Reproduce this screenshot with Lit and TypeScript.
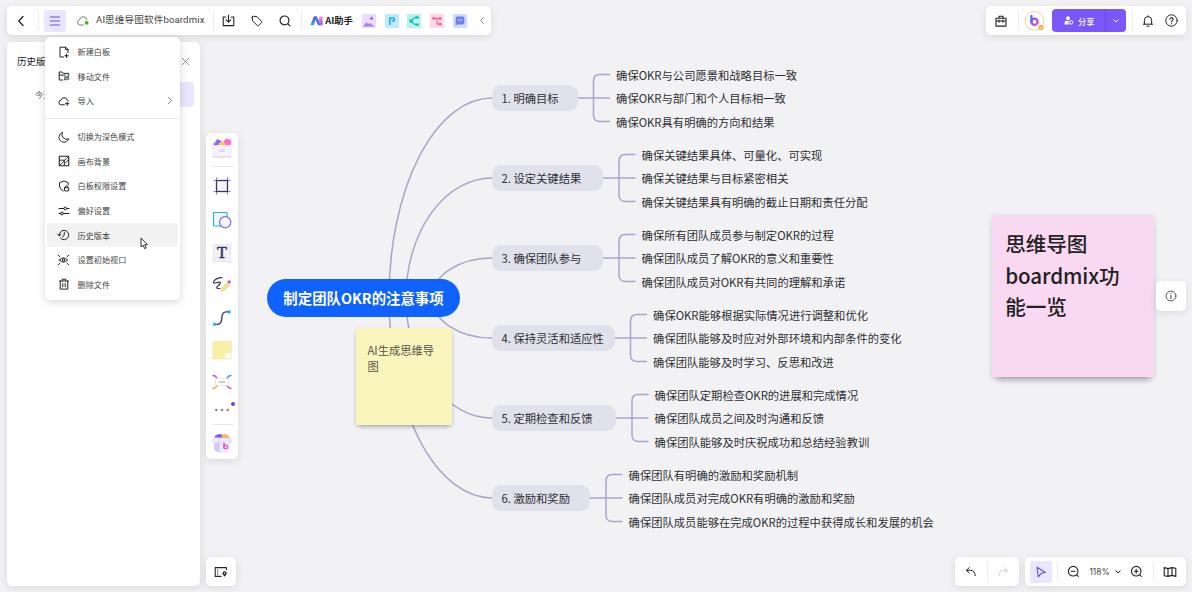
import { LitElement, html, svg, css } from "lit";
import { customElement, property } from "lit/decorators.js";
import { classMap } from "lit/directives/class-map.js";

const box = (w: number, h: number, body: unknown) =>
  html`<svg width=${w} height=${h} viewBox="0 0 ${w} ${h}" fill="none" stroke="currentColor" stroke-width="1" stroke-linecap="round" stroke-linejoin="round">${body}</svg>`;

const icons: Record<string, () => unknown> = {
  back: () => box(8, 12, svg`<path d="M6 1.5L1.8 6 6 10.5" stroke-width="1.3"/>`),
  burger: () => box(12, 12, svg`<path d="M1.3 2h9.4M1.3 6h9.4M1.3 10h9.4" stroke-width="1.1"/>`),
  cloud: () => box(14, 12, svg`<path d="M7.5 10H4a2.7 2.7 0 0 1-.4-5.3A3.8 3.8 0 0 1 11 4.6" stroke="#777"/><circle cx="10.7" cy="7.8" r="1.9" fill="#3fb50a" stroke="none"/>`),
  download: () => box(13, 13, svg`<path d="M3.8 3H1.2v8.6h10.6V3H9.2M6.5 1v7M4.2 5.8l2.3 2.3 2.3-2.3" stroke-width="1.1"/>`),
  tag: () => box(12, 12, svg`<path d="M1.2 2.2L1.6 6l4.8 4.6q.6.5 1.2 0l3-3q.5-.6 0-1.2L6 1.7 2.2 1.2q-1 0-1 1z"/>`),
  search: () => box(12, 12, svg`<circle cx="5.5" cy="5.4" r="4.4" stroke-width="1.2"/><path d="M8.9 8.8l2 2.1" stroke-width="1.2"/>`),
  left: () => box(6, 9, svg`<path d="M4.4 1.5L1.5 4.5l2.9 3" stroke="#888"/>`),
  ai: () => html`<svg width="13" height="10" viewBox="0 0 13 10"><defs><linearGradient id="a" x1="0" y1="1" x2="1" y2="0"><stop offset="0" stop-color="#20c8f0"/><stop offset=".6" stop-color="#4a6bf5"/><stop offset="1" stop-color="#5a43e0"/></linearGradient><linearGradient id="b" x1="0" y1="0" x2="0" y2="1"><stop offset="0" stop-color="#ff8dbb"/><stop offset="1" stop-color="#a24df5"/></linearGradient></defs><path d="M.3 9.2L3.6 1q.3-.5.9-.5h2L3.7 9.2z" fill="url(#a)"/><path d="M4.2.5h2.6l4 8.700H8z" fill="#3f6ef2"/><path d="M9.6.6h2.500q.5 0 .5.6v8h-1.800L8.800 4.600z" fill="url(#b)"/></svg>`,
  image: () => html`<svg width="14" height="14" viewBox="0 0 14 14"><rect width="14" height="14" rx="1" fill="#eadcfd"/><path d="M1 12.6l3-3.7q.6-.6 1.2 0l1.2 1.3.8-.8q.7-.6 1.3 0l4 3.2z" fill="#a97cf2"/><path d="M9.6 2.6v3.600M7.800 4.400h3.600" stroke="#9350e8" stroke-width="1"/></svg>`,
  ppt: () => html`<svg width="14" height="14" viewBox="0 0 14 14"><rect width="14" height="14" rx="1" fill="#bfeafd"/><path d="M4.900 11V4h3.300q1.400 0 1.400 1.500t-1.400 1.500H6.800" fill="none" stroke="#1ba4f3" stroke-width="1.500"/></svg>`,
  mind: () => html`<svg width="14" height="14" viewBox="0 0 14 14"><rect width="14" height="14" rx="1" fill="#b9f2ec"/><path d="M9.500 3.400Q5.500 3.600 5.200 7q.3 3.400 4.300 3.600" fill="none" stroke="#10c4b8" stroke-width="1.200"/><circle cx="4.200" cy="7" r="2.100" fill="#10c4b8"/><rect x="8.200" y="2.300" width="3.800" height="2.400" rx="1" fill="#10c4b8"/><rect x="8.200" y="9.400" width="3.800" height="2.400" rx="1" fill="#10c4b8"/></svg>`,
  flow: () => html`<svg width="14" height="14" viewBox="0 0 14 14"><rect width="14" height="14" rx="1" fill="#ffd7e5"/><path d="M3 4.400h7M7 4.400v5.700h3" fill="none" stroke="#ef5a8d" stroke-width="1"/><rect x="2.300" y="3.200" width="2.800" height="2.400" rx=".6" fill="#ef5a8d"/><rect x="8.800" y="3.200" width="2.800" height="2.400" rx=".6" fill="#ef5a8d"/><rect x="8.800" y="8.900" width="2.800" height="2.400" rx=".6" fill="#ef5a8d"/></svg>`,
  chat: () => html`<svg width="14" height="14" viewBox="0 0 14 14"><rect width="14" height="14" rx="1" fill="#cfdcfd"/><path d="M4.300 2.600h5.400q1.700 0 1.700 1.700v4.400q0 1.700-1.700 1.700H4.600l-2 1.200V4.300q0-1.700 1.700-1.700z" fill="#6f7ff4"/><path d="M5.800 5.300v1.600M8.200 5.300v1.600" stroke="#fff" stroke-width=".9"/></svg>`,
  close: () => box(9, 9, svg`<path d="M1.2 1.2l6.600 6.600M7.800 1.2L1.2 7.800" stroke="#777" stroke-width=".8"/>`),
  newBoard: () => box(12, 12, svg`<path d="M5.600 11H2V1.200h5.800L10 3.400v3.200M8.500 8v3.600M6.700 9.800h3.600M7.600 1.300v2.300H10"/>`),
  moveFile: () => box(12, 12, svg`<path d="M4.800 10H1.200V2h3l1.200 1.400h5.300v1.800M1.200 5.100h6M6.300 7.100h4.600L9.800 6.200M10.900 9H6.300l1.100.9"/>`),
  importFile: () => box(12, 12, svg`<path d="M6.300 9.800H3.400a2.300 2.300 0 0 1-.3-4.600 3.200 3.200 0 0 1 6.200-.2q1 .3 1.400 1M9.200 7v3.400M7.500 8.700h3.400"/>`),
  moon: () => box(12, 12, svg`<path d="M4.200 1.500A5 5 0 1 0 10.700 7.800 4.900 4.900 0 0 1 4.200 1.500z"/>`),
  background: () => box(12, 12, svg`<rect x="1.300" y="1.300" width="9.400" height="9.400" rx=".5" stroke-width="1.100"/><path d="M1.500 10.500l9-9M1.500 5.200h5.200M6.300 6v4.500M6.500 8.800l4-4" stroke-width=".9"/>`),
  shield: () => box(12, 12, svg`<path d="M5.300 11Q1.500 9.400 1.500 6V2.600L5.900 1l4.300 1.600v2.200"/><rect x="6.500" y="7.700" width="4.200" height="3.200" rx=".4"/><path d="M7.400 7.600v-.8q0-1.100 1.200-1.100t1.200 1.100v.8"/>`),
  sliders: () => box(12, 12, svg`<path d="M1 3.500h4.800M8.600 3.500H11M1 8.500h1.600M5.400 8.500H11"/><circle cx="7.200" cy="3.500" r="1.400"/><circle cx="4" cy="8.500" r="1.400"/>`),
  history: () => box(13, 12, svg`<path d="M2.300 6.300A4.700 4.700 0 1 1 3.600 9.300M.6 5.200l1.700 1.700L4 5.300M7.400 3.600L7 6.600 5.400 8"/>`),
  viewport: () => box(13, 12, svg`<path d="M2.400 6q4-4.400 8.200 0-4.200 4.400-8.200 0zM1.200 1.200l1.700 1.500M11.800 1.200l-1.700 1.500M1.200 10.800l1.700-1.500M11.800 10.800l-1.700-1.500"/><circle cx="6.500" cy="6" r="1.200"/>`),
  trash: () => box(12, 12, svg`<path d="M1.400 3h9.200M4.200 2.800V1.200h3.600v1.600M2.200 3.200v7.900h7.600V3.200M4.800 5.500v3.300M7.200 5.500v3.300"/>`),
  right: () => box(6, 9, svg`<path d="M1.500 1.500l3 3-3 3" stroke="#777"/>`),
  down: () => box(8, 6, svg`<path d="M1.800 1.800L4 4l2.200-2.200"/>`),
  toolbox: () => box(12, 12, svg`<path d="M1 3.300h10v7.800H1zM4 3V1.200h4V3M1.200 6h9.600M4 5v2.200M8 5v2.200" stroke-width="1.100"/>`),
  bell: () => box(12, 12, svg`<path d="M1.400 9.200h9.200M2.400 9V5.200a3.600 3.600 0 0 1 7.200 0V9M5 11.200h2M6 .8v.6"/>`),
  help: () => box(13, 13, svg`<circle cx="6.500" cy="6.500" r="5.700"/><path d="M4.900 5.300a1.600 1.600 0 1 1 2.300 1.400q-.7.4-.7 1.100M6.500 9.500v.2" stroke-width="1.100"/>`),
  share: () => html`<svg width="10" height="9" viewBox="0 0 10 9"><circle cx="4" cy="2.200" r="1.900" fill="#fff"/><path d="M.5 8.600V7q0-2.300 2.400-2.300h1.800Q4 7 5.200 8.600z" fill="#fff"/><circle cx="7.200" cy="6.400" r="1.700" fill="none" stroke="#fff" stroke-width="1"/></svg>`,
  info: () => box(12, 12, svg`<circle cx="6" cy="6" r="4.900" stroke-width=".9"/><path d="M6 5.500v3M6 3.500v.2" stroke-width="1.100"/>`),
  undo: () => box(12, 12, svg`<path d="M4.300 1.600L1.400 4.300l2.900 2.700M1.600 4.300h4.200Q10 4.500 10.200 9.700"/>`),
  redo: () => box(12, 12, svg`<path d="M7.700 1.600l2.900 2.700-2.900 2.700M10.400 4.300H6.200Q2 4.500 1.800 9.700"/>`),
  pointer: () => box(12, 12, svg`<path d="M2 1.200l8.400 5.300-4.300.8L3.300 10.900z" stroke-width="1.100"/>`),
  minus: () => box(13, 13, svg`<circle cx="6.200" cy="6.200" r="4.800" stroke-width="1.100"/><path d="M4.200 6.200h4M9.800 9.800l1.500 1.500" stroke-width="1.100"/>`),
  plus: () => box(13, 13, svg`<circle cx="6.200" cy="6.200" r="4.800" stroke-width="1.100"/><path d="M4.200 6.200h4M6.200 4.200v4M9.800 9.800l1.500 1.500" stroke-width="1.100"/>`),
  map: () => box(14, 12, svg`<path d="M1.200 1.600L5 2.600l4-1 3.800.6v8.200L9 9.400l-4 1-3.800-.6zM5 2.600v7.600M9 1.800v7.600" stroke-width="1.100"/>`),
  minimap: () => box(14, 12, svg`<path d="M7 10.400H1.200V1.600h11.200v2.200M3.700 4v.2M3.700 6v.2M3.700 8v.2" stroke-width="1.100"/><path d="M10.600 10.800Q8.600 8.700 8.600 7.300a2 2 0 0 1 4 0q0 1.400-2 3.500z" fill="currentColor" stroke="none"/><circle cx="10.600" cy="7.200" r=".7" fill="#fff" stroke="none"/>`),
  gift: () => html`<svg width="20" height="20" viewBox="0 0 20 20"><rect x=".7" y="4" width="18.600" height="15.600" rx="1.600" fill="#d3cfdf"/><path d="M1.600 7.500L5 .9 9.600 3 8 8z" fill="#8a68f4"/><path d="M11.600 3.200L14.200.4l4.600 1.400.2 4.400L17 8h-5z" fill="#ff6ad5"/><path d="M6 8q.6-4 4-4.200 3.600.2 4 4.200z" fill="#ffc45c"/><path d="M1 7.200h18v9.800q0 1.500-1.600 1.500H2.600Q1 18.500 1 17z" fill="#f5f2fe"/><rect x="7.400" y="11.500" width="5.200" height="2.600" rx=".8" fill="#dcd3fa"/></svg>`,
  frame: () => html`<svg width="18" height="18" viewBox="0 0 18 18" fill="none"><rect x="3.500" y="3.500" width="11" height="11" fill="#f3f2f8" stroke="#3b3560" stroke-width="1.300"/><path d="M3.500 2.800V.6M14.500 2.800V.6M3.500 15.200v2.200M14.500 15.200v2.200M2.800 3.500H.6M2.800 14.500H.6M15.200 3.500h2.200M15.200 14.500h2.200" stroke="#7b76b5" stroke-width="1.200"/></svg>`,
  shapes: () => html`<svg width="20" height="18" viewBox="0 0 20 18"><rect x="1.500" y="1.500" width="13.500" height="13.500" rx=".8" fill="#ebfafd" stroke="#35aecb" stroke-width="1.200"/><circle cx="13.200" cy="11.200" r="5.600" fill="#f4f3ff" stroke="#746fe0" stroke-width="1.200"/></svg>`,
  text: () => html`<svg width="20" height="20" viewBox="0 0 20 20"><rect x="1.700" y="1.700" width="16.600" height="16.600" fill="#eff0f8" stroke="#dddde6" stroke-width=".7"/><g fill="#fff" stroke="#d9d9e2" stroke-width=".6"><circle cx="1.900" cy="1.900" r="1.500"/><circle cx="18.100" cy="1.900" r="1.500"/><circle cx="1.900" cy="18.100" r="1.500"/><circle cx="18.100" cy="18.100" r="1.500"/></g><text x="10" y="15" text-anchor="middle" font-family="Liberation Serif, serif" font-size="16" fill="#35315a" stroke="#35315a" stroke-width=".5">T</text></svg>`,
  pen: () => html`<svg width="20" height="18" viewBox="0 0 20 18" fill="none"><path d="M9.800 1.600Q4.500 1.500 1.700 5.500q-.9 1.900 1.600 1.500l4-.9q1.800.2.6 1.900l-3 3q-.8 1.300 1 1.500h2" stroke="#35315a" stroke-width="1.200" stroke-linecap="round"/><path d="M8.600 15.600l.6-3.200 7-7 2.600 2.600-7 7z" fill="#f7e078" stroke="#ddd6ee" stroke-width=".7"/><circle cx="17.200" cy="5.700" r="1.500" fill="#b347e0"/></svg>`,
  connector: () => html`<svg width="20" height="18" viewBox="0 0 20 18" fill="none"><path d="M3 15.300h2.500Q9.600 15.300 9.800 9T14.500 2.900H17" stroke="#35315a" stroke-width="1.300"/><circle cx="2.600" cy="15.300" r="1.800" fill="#33b1e8"/><circle cx="17" cy="2.900" r="1.800" fill="#33b1e8"/></svg>`,
  sticky: () => html`<svg width="20" height="20" viewBox="0 0 20 20"><path d="M.8 1.200h18.400V19H.8z" fill="#fdfdfb" stroke="#e3e1d6" stroke-width=".7"/><path d="M.8 1.200h18.400V13l-6 6H.8z" fill="#f8efa4"/><path d="M13.200 19v-5.200q0-.8.8-.8h5.200z" fill="#fff"/></svg>`,
  mindmap: () => html`<svg width="20" height="16" viewBox="0 0 20 16" fill="none" stroke-width="1.300" stroke-linecap="round"><path d="M1 1.500q3 .2 4.200 3.500" stroke="#b25ad8"/><path d="M19 1.500q-3 .2-4.200 3.500" stroke="#4a9be0"/><path d="M1 14.500q3-.2 4.200-3.500" stroke="#f0a52e"/><path d="M19 14.500q-3-.2-4.200-3.500" stroke="#e25585"/><rect x="3.500" y="4.800" width="13" height="6.500" rx="1" fill="#fff" stroke="#dcdce4" stroke-width=".8"/><path d="M7.400 8h5.200" stroke="#bbb" stroke-width="1.700"/></svg>`,
  more: () => html`<svg width="16" height="6" viewBox="0 0 16 6" fill="#888"><circle cx="2.300" cy="3" r="1.300"/><circle cx="8" cy="3" r="1.300"/><circle cx="13.700" cy="3" r="1.300"/></svg>`,
  kit: () => html`<svg width="22" height="20" viewBox="0 0 22 20"><path d="M3.800 3q3.500-2.600 7.200-1.600V5H3.500z" fill="#7a5fe6"/><path d="M11 1.400q4.600-1 7.400 1.800L18 5.600h-7.600z" fill="#f6b655"/><path d="M3.300 5h5.400v14.400L4.400 18q-1.100-.4-1.100-1.400z" fill="#d2c6fb"/><path d="M8.700 5h10v11.800q0 1.100-1.100 1.300l-8.900 1.300z" fill="#efe9ff" stroke="#d9d0f2" stroke-width=".4"/><path d="M3.300 4.800L.8 8.900l6 1.300 2-5.400zM18.700 4.800l2.600 4-2.600.7z" fill="#f1ecff" stroke="#d5ccef" stroke-width=".5"/><path d="M13 10.200v5" stroke="#9b4af0" stroke-width="1.300" stroke-linecap="round"/><circle cx="14.800" cy="14" r="1.800" fill="none" stroke="#f0509c" stroke-width="1.300"/></svg>`,
  logo: () => html`<svg width="22" height="22" viewBox="0 0 22 22" fill="none"><defs><linearGradient id="c" x1="0" y1="0" x2="1" y2="1"><stop offset="0" stop-color="#5b6df8"/><stop offset=".5" stop-color="#b04bea"/><stop offset="1" stop-color="#fa4f88"/></linearGradient></defs><circle cx="10.500" cy="10.800" r="9.300" fill="#fff" stroke="#f4cf94" stroke-width="1"/><path d="M7.400 5.800v6.200" stroke="#3f74f4" stroke-width="2.200" stroke-linecap="round"/><circle cx="10.500" cy="11.800" r="3.100" stroke="url(#c)" stroke-width="2.300"/><circle cx="17" cy="17.500" r="2.600" fill="#f3a84c"/><path d="M15.700 17.300l1.300 1.200 1.300-1.200" stroke="#fff" stroke-width=".8"/></svg>`,
};

@customElement("ui-icon")
class UiIcon extends LitElement {
  @property() name = "";
  static styles = css`
    :host { display: inline-flex; flex: none; }
    svg { display: block; overflow: visible; }
  `;
  render() {
    return icons[this.name]?.();
  }
}

const topics = [
  { label: "1. 明确目标", y: 98, w: 85.5, leaves: ["确保OKR与公司愿景和战略目标一致", "确保OKR与部门和个人目标相一致", "确保OKR具有明确的方向和结果"] },
  { label: "2. 设定关键结果", y: 178, w: 111, leaves: ["确保关键结果具体、可量化、可实现", "确保关键结果与目标紧密相关", "确保关键结果具有明确的截止日期和责任分配"] },
  { label: "3. 确保团队参与", y: 258, w: 111, leaves: ["确保所有团队成员参与制定OKR的过程", "确保团队成员了解OKR的意义和重要性", "确保团队成员对OKR有共同的理解和承诺"] },
  { label: "4. 保持灵活和适应性", y: 338, w: 122.5, leaves: ["确保OKR能够根据实际情况进行调整和优化", "确保团队能够及时应对外部环境和内部条件的变化", "确保团队能够及时学习、反思和改进"] },
  { label: "5. 定期检查和反馈", y: 418, w: 124, leaves: ["确保团队定期检查OKR的进展和完成情况", "确保团队成员之间及时沟通和反馈", "确保团队能够及时庆祝成功和总结经验教训"] },
  { label: "6. 激励和奖励", y: 498, w: 98, leaves: ["确保团队有明确的激励和奖励机制", "确保团队成员对完成OKR有明确的激励和奖励", "确保团队成员能够在完成OKR的过程中获得成长和发展的机会"] },
];
const rootY = 298;
const reach: Record<number, number> = { 200: 103, 120: 86, 40: 60 };

@customElement("mind-map")
class MindMap extends LitElement {
  static styles = css`
    :host { display: block; position: absolute; inset: 0; color: #2e2e33; font-size: 11.3px; }
    svg { position: absolute; inset: 0; }
    .topic { position: absolute; left: 492px; height: 26px; display: flex; align-items: center; transform: translateY(-50%); white-space: nowrap; }
    .pill { box-sizing: border-box; height: 26px; line-height: 26px; padding-left: 9.500px; border-radius: 9px; background: #e1e1eb; }
    .leaves { margin-left: 38.600px; display: flex; flex-direction: column; }
    .leaf { height: 23.500px; line-height: 24px; }
    .root { position: absolute; left: 267px; top: 279px; width: 193px; height: 38px; line-height: 37px; border-radius: 19px; background: #0f62fe; color: #fff; font-size: 14.400px; font-weight: 700; text-align: center; white-space: nowrap; }
    .note { position: absolute; box-sizing: border-box; }
    .yellow { left: 355.500px; top: 328px; width: 96.500px; height: 97px; padding: 13.500px 12px; background: #faf5bd; color: #55544a; font-size: 11.300px; line-height: 16.700px; box-shadow: 0 3px 5px -2px rgba(0,0,0,.35), 0 1px 4px rgba(0,0,0,.08); }
    .pink { left: 992px; top: 215px; width: 162px; height: 162px; padding: 13px 20px 13px 13.200px; background: #f9d8f1; color: #222; font-size: 20.600px; letter-spacing: -.1px; font-weight: 500; line-height: 31.600px; box-shadow: 0 6px 7px -4px rgba(0,0,0,.35), 0 1px 6px rgba(0,0,0,.1); }
  `;
  render() {
    return html`
      <svg width="1192" height="592" fill="none" stroke="#a9a5c9" stroke-width="1.5">
        ${topics.map((t) => {
          const dy = Math.abs(t.y - rootY);
          const rx = reach[dy];
          const r = 492 + t.w;
          const top = t.y - 23.5;
          const bottom = t.y + 23.5;
          return svg`<path d="M${492 - rx} ${rootY}A${rx} ${dy} 0 0 ${t.y < rootY ? 1 : 0} 492 ${t.y}"/>
            <path d="M${r} ${t.y}h32.500M${r + 32.5} ${top}h-10q-6.500 0-6.500 6.500V${bottom - 6.5}q0 6.500 6.500 6.500h10"/>`;
        })}
      </svg>
      ${topics.map(
        (t) => html`<div class="topic" style="top:${t.y}px">
          <div class="pill" style="width:${t.w}px">${t.label}</div>
          <div class="leaves">${t.leaves.map((l) => html`<div class="leaf">${l}</div>`)}</div>
        </div>`
      )}
      <div class="root">制定团队OKR的注意事项</div>
      <div class="note yellow">AI生成思维导图</div>
      <div class="note pink">思维导图boardmix功能一览</div>
    `;
  }
}

const menu: [string, string, string?][] = [
  ["newBoard", "新建白板"],
  ["moveFile", "移动文件"],
  ["importFile", "导入", "more"],
  ["", ""],
  ["moon", "切换为深色模式"],
  ["background", "画布背景"],
  ["shield", "白板权限设置"],
  ["sliders", "偏好设置"],
  ["history", "历史版本", "hover"],
  ["viewport", "设置初始视口"],
  ["trash", "删除文件"],
];

@customElement("main-menu")
class MainMenu extends LitElement {
  static styles = css`
    :host { display: block; box-sizing: border-box; width: 135.500px; padding: 2.300px 2.500px 3px; background: #fff; border-radius: 5px; box-shadow: 0 2px 8px rgba(0,0,0,.16); font-size: 8.150px; color: #444; }
    .item { display: flex; align-items: center; height: 24.600px; padding: 0 5px 0 10px; border-radius: 4px; }
    .glyph { display: flex; justify-content: center; width: 13px; margin-right: 7.500px; color: #222; }
    .label { flex: 1; }
    .hover { background: #f2f2f2; }
    .rule { height: 1px; margin: 5.200px -2.500px; background: #e6e6e8; }
  `;
  render() {
    return menu.map(([icon, label, kind]) =>
      icon
        ? html`<div class=${classMap({ item: true, hover: kind === "hover" })}>
            <span class="glyph"><ui-icon name=${icon}></ui-icon></span><span class="label">${label}</span>
            ${kind === "more" ? html`<ui-icon name="right"></ui-icon>` : ""}
          </div>`
        : html`<div class="rule"></div>`
    );
  }
}

const tools: [string, number][] = [
  ["gift", 31], ["", 6], ["frame", 33.5], ["shapes", 33.3], ["text", 33.2], ["pen", 32], ["connector", 32.5],
  ["sticky", 32.5], ["mindmap", 32], ["more", 23], ["", 6], ["kit", 31.5],
];

@customElement("app-root")
class AppRoot extends LitElement {
  static styles = css`
    :host { display: block; position: relative; width: 1192px; height: 592px; overflow: hidden; background: #f2f2f4; color: #222; font-family: "Noto Sans CJK SC", "Noto Sans", sans-serif; }
    .ui { position: absolute; inset: 0; box-sizing: border-box; padding: 6px 6px 6px 6.500px; display: flex; flex-direction: column; gap: 7px; }
    .card { background: #fff; border-radius: 5px; box-shadow: 0 2px 9px rgba(0,0,0,.1); }
    .header, .bar { display: flex; align-items: center; }
    .header { justify-content: space-between; height: 29px; }
    .bar { height: 29px; }
    .cell { display: flex; flex: none; align-items: center; justify-content: center; }
    .w14 { width: 14px; } .w26 { width: 26px; } .w27 { width: 27px; } .w28 { width: 28px; } .w29 { width: 29px; }
    .rule { flex: none; width: 1px; height: 19px; background: #ededf0; }
    .active { width: 22px; height: 22px; border-radius: 2.500px; background: #ebe6ff; color: #6a4de0; }
    .back { width: 29px; margin-right: 2.500px; }
    .burger { margin-left: 5px; margin-right: 4px; }
    .title { width: 117.300px; flex: none; font-family: Roboto, "Noto Sans CJK SC", sans-serif; font-size: 9.600px; letter-spacing: .12px; line-height: 14px; padding-bottom: 1px; color: #444; white-space: nowrap; }
    .find { margin-right: 2.500px; }
    .brand { margin: 0 2px 0 8.500px; }
    .assistant { flex: none; width: 36.500px; font-size: 9.300px; font-weight: 700; white-space: nowrap; line-height: 14px; padding-bottom: 1px; }
    .apps { display: flex; gap: 8.800px; }
    .fold { box-sizing: border-box; width: 24.500px; padding-left: 5px; }
    .body { flex: 1; display: flex; min-height: 0; }
    .panel { flex: none; width: 193px; box-sizing: border-box; padding: 10px 5.500px 0 10.500px; }
    .panel-head { display: flex; align-items: center; justify-content: space-between; height: 18px; font-size: 9.500px; padding-right: 4px; }
    .version { height: 25px; margin: 12px 0 0 10px; padding-left: 8px; line-height: 24px; font-size: 8.200px; color: #666; border-radius: 4px; background: linear-gradient(90deg, #fff 40px, #ebe6ff 40px); }
    .rail { display: flex; flex-direction: column; justify-content: space-between; width: 32px; margin-left: 6.500px; padding-top: 90.500px; }
    .tools { display: flex; flex-direction: column; align-items: center; }
    .tool { display: flex; align-items: center; justify-content: center; width: 32px; position: relative; }
    .tool i { width: 21px; height: 1px; background: #e7e7ea; }
    .dot { position: absolute; right: 3px; top: 4px; width: 4px; height: 4px; border-radius: 2px; background: #6247e8; }
    .mini { width: 30px; height: 29px; color: #222; }
    .side { flex: 1; display: flex; flex-direction: column; align-items: flex-end; justify-content: space-between; padding-top: 239px; }
    .tab { width: 30px; height: 30px; color: #444; }
    .dock { display: flex; gap: 6px; }
    .share { display: flex; align-items: center; width: 74.500px; height: 22.500px; margin-right: 5.500px; border-radius: 4px; background: #7b57fa; color: #fff; font-size: 8.200px; font-weight: 500; }
    .share-main { box-sizing: border-box; display: flex; align-items: center; gap: 4px; width: 54.500px; height: 100%; padding-left: 12.500px; border-right: 1px solid #6c49e8; }
    .share-down { flex: 1; display: flex; justify-content: center; }
    .box { width: 30px; margin-right: 2px; }
    .avatar { width: 33px; }
    .bell { width: 31px; }
    .help { width: 15px; margin-right: 7.500px; }
    .faded { color: #d0d0d0; }
    .undo { width: 31.500px; }
    .zoom .active { margin: 0 5px 0 4.500px; }
    .out { width: 31px; }
    .percent { width: 22px; font-family: Inter, sans-serif; font-size: 8.400px; color: #444; text-align: center; }
    .caret { width: 15px; }
    .in { width: 21px; margin-right: 6.500px; }
    .map { width: 32px; }
    .menu { position: absolute; left: 44.500px; top: 37px; }
    .cursor { position: absolute; left: 140px; top: 237px; }
  `;
  render() {
    const cell = (icon: string, cls: string) => html`<span class="cell ${cls}"><ui-icon name=${icon}></ui-icon></span>`;
    const rule = html`<span class="rule"></span>`;
    return html`
      <mind-map></mind-map>
      <div class="ui">
        <div class="header">
          <div class="bar card">
            ${cell("back", "back")}${rule}${cell("burger", "active burger")}${cell("cloud", "w26")}
            <span class="title">AI思维导图软件boardmix</span>${rule}
            ${cell("download", "w29")}${cell("tag", "w28")}${cell("search", "w27 find")}${rule}
            <span class="cell brand"><ui-icon name="ai"></ui-icon></span><span class="assistant">AI助手</span>
            <div class="apps">${["image", "ppt", "mind", "flow", "chat"].map((n) => cell(n, "w14"))}</div>
            ${cell("left", "fold")}
          </div>
          <div class="bar card">
            ${cell("toolbox", "box")}${rule}${cell("logo", "avatar")}
            <div class="share"><span class="share-main"><ui-icon name="share"></ui-icon>分享</span><span class="share-down"><ui-icon name="down"></ui-icon></span></div>
            ${rule}${cell("bell", "bell")}${cell("help", "help")}
          </div>
        </div>
        <div class="body">
          <div class="panel card">
            <div class="panel-head"><span>历史版本</span><ui-icon name="close"></ui-icon></div>
            <div class="version">今天</div>
          </div>
          <div class="rail">
            <div class="tools card">
              ${tools.map(([n, h]) => html`<div class="tool" style="height:${h}px">
                ${n ? html`<ui-icon name=${n}></ui-icon>` : html`<i></i>`}
                ${n === "more" ? html`<span class="dot"></span>` : ""}
              </div>`)}
            </div>
            <div class="cell card mini"><ui-icon name="minimap"></ui-icon></div>
          </div>
          <div class="side">
            <div class="cell card tab"><ui-icon name="info"></ui-icon></div>
            <div class="dock">
              <div class="bar card">${cell("undo", "undo")}${rule}${cell("redo", "undo faded")}</div>
              <div class="bar card zoom">
                ${cell("pointer", "active")}${rule}${cell("minus", "out")}
                <span class="percent">118%</span>${cell("down", "caret")}${cell("plus", "in")}${rule}${cell("map", "map")}
              </div>
            </div>
          </div>
        </div>
      </div>
      <main-menu class="menu"></main-menu>
      <svg class="cursor" width="8" height="13" viewBox="0 0 8 13"><path d="M1 1v9l2.100-1.900 1.500 3.500 1.600-.7-1.500-3.300h2.700z" fill="#fff" stroke="#222" stroke-width=".9" stroke-linejoin="round"/></svg>
    `;
  }
}
